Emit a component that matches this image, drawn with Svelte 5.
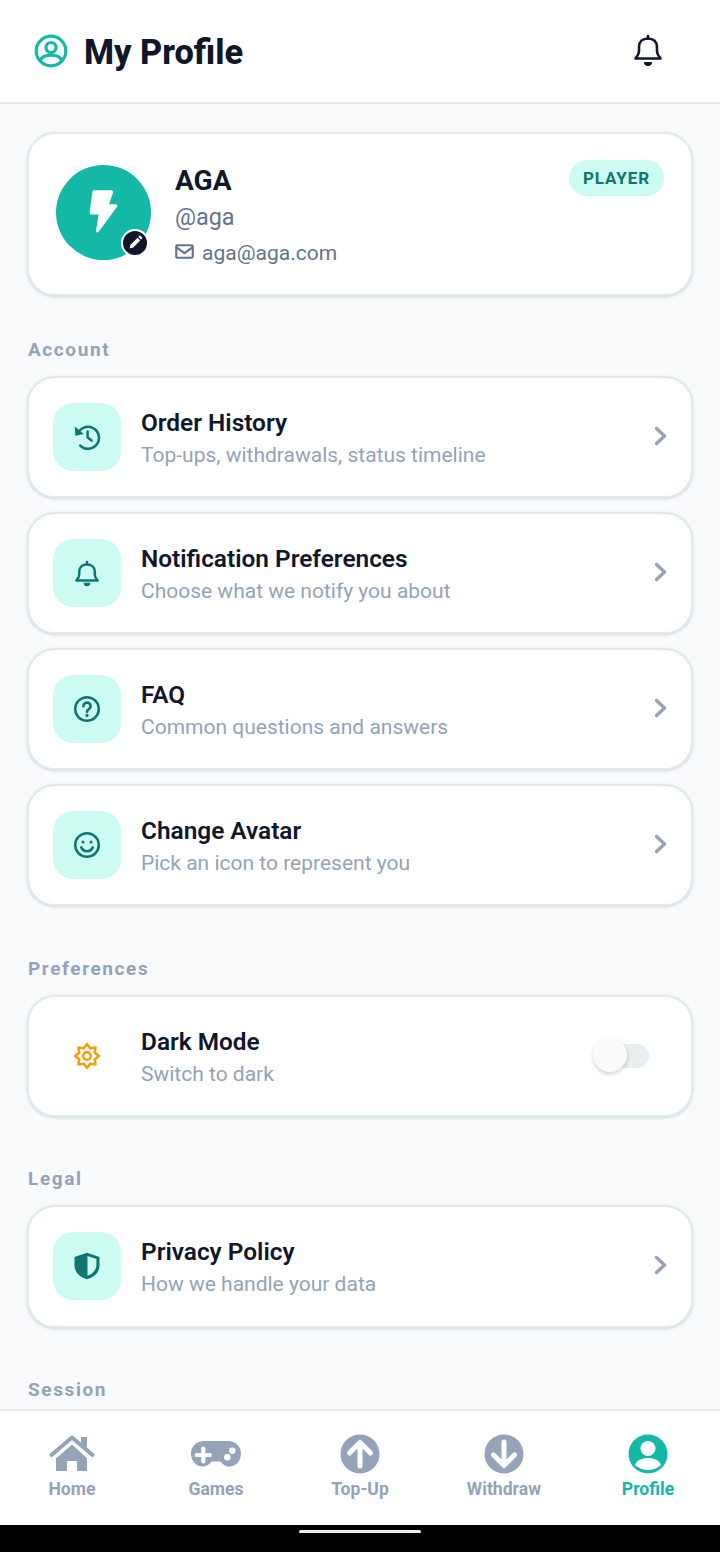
<script>
  const account = [
    { icon: 'history', title: 'Order History', sub: 'Top-ups, withdrawals, status timeline' },
    { icon: 'bell', title: 'Notification Preferences', sub: 'Choose what we notify you about' },
    { icon: 'help', title: 'FAQ', sub: 'Common questions and answers' },
    { icon: 'smile', title: 'Change Avatar', sub: 'Pick an icon to represent you' }
  ];
  const nav = [
    { icon: 'home', label: 'Home' },
    { icon: 'games', label: 'Games' },
    { icon: 'up', label: 'Top-Up' },
    { icon: 'down', label: 'Withdraw' },
    { icon: 'profile', label: 'Profile', active: true }
  ];
</script>

{#snippet glyph(name)}
  <svg class="glyph" viewBox="0 0 28 28" fill="none" stroke="currentColor" stroke-width="2.5" stroke-linecap="round" stroke-linejoin="round">
    {#if name === 'history'}
      <path d="M4.600 11.200A11 11 0 1 1 7.200 22.600" />
      <path d="M1.800 3.600 2.400 12.800 10.800 11Z" fill="currentColor" stroke="none" />
      <path d="M14.600 8.600v6l4 3" />
    {:else if name === 'bell'}
      <path d="M3.400 21.600h21.200l-1-1.400c-1-1.200-1.800-2.400-1.800-4.600v-3C21.800 8.400 18.600 5.400 14 5.400s-7.800 3-7.800 7.200v3c0 2.200-.8 3.400-1.800 4.600Z" />
      <path d="M14 3v2" />
      <path d="M10.600 23.800h6.800a3.400 3.400 0 0 1-6.800 0Z" fill="currentColor" stroke="none" />
    {:else if name === 'help'}
      <circle cx="14" cy="14" r="11.800" />
      <path d="M10.400 11.200a3.600 3.600 0 1 1 5.600 3c-1.200.8-2 1.400-2 2.600" stroke-width="2.700" />
      <circle cx="14" cy="20.400" r="1.600" fill="currentColor" stroke="none" />
    {:else if name === 'smile'}
      <circle cx="14" cy="14" r="11.800" />
      <circle cx="10" cy="11" r="1.500" fill="currentColor" stroke="none" />
      <circle cx="18" cy="11" r="1.500" fill="currentColor" stroke="none" />
      <path d="M8.200 16.400c1.200 2.500 3.300 3.800 5.800 3.800s4.600-1.300 5.800-3.800" />
    {:else if name === 'gear'}
      <path d="M14 2 17.210 6.240 22.490 5.510 21.760 10.790 26 14 21.760 17.210 22.490 22.490 17.210 21.760 14 26 10.790 21.760 5.510 22.490 6.240 17.210 2 14 6.240 10.790 5.510 5.510 10.790 6.240Z" />
      <circle cx="14" cy="14" r="3.800" />
    {:else if name === 'shield'}
      <path d="M14 .8 26.500 5v8c0 7.500-5.200 12-12.500 14.200C6.700 25 1.500 20.500 1.500 13V5Z" stroke="none" fill="currentColor" />
      <path d="M14.500 4v19.800c5-2 8.900-5.500 8.900-10.800V7Z" stroke="none" fill="#ccfbf1" />
    {/if}
  </svg>
{/snippet}

{#snippet navIcon(name)}
  <svg class="nav-glyph" viewBox="0 0 52 52">
    {#if name === 'home'}
      <path d="M5.500 27 26 9.500 46.500 27" fill="none" stroke="currentColor" stroke-width="4" stroke-linecap="round" stroke-linejoin="round" />
      <path d="M35 9h6v13l-6-5Z" fill="currentColor" />
      <path d="M10 30.500 26 16.500 41 30v13H31V33H21v10H10Z" fill="currentColor" />
    {:else if name === 'games'}
      <path d="M14 13h24c7.500 0 13 5.500 13 12.500 0 7-5 13-11.500 13-4.500 0-7-2.500-9-5H21.500c-2 2.500-4.500 5-9 5C6 38.500 1 32.500 1 25.500 1 18.500 6.500 13 14 13Z" fill="currentColor" />
      <path d="M13.300 20.500v13M6.800 27h13" stroke="#fff" stroke-width="4.200" stroke-linecap="round" />
      <circle cx="42.300" cy="22.700" r="3.300" fill="#fff" />
      <circle cx="37.300" cy="29.300" r="3.300" fill="#fff" />
    {:else if name === 'up'}
      <circle cx="26" cy="26" r="19.500" fill="currentColor" />
      <path d="M26 38V15M15.500 25 26 14.500 36.500 25" fill="none" stroke="#fff" stroke-width="5" stroke-linecap="round" stroke-linejoin="round" />
    {:else if name === 'down'}
      <circle cx="26" cy="26" r="19.500" fill="currentColor" />
      <path d="M26 14v23M15.500 27 26 37.500 36.500 27" fill="none" stroke="#fff" stroke-width="5" stroke-linecap="round" stroke-linejoin="round" />
    {:else if name === 'profile'}
      <circle cx="26" cy="26" r="19.500" fill="currentColor" />
      <circle cx="26" cy="20.500" r="7.500" fill="#fff" />
      <path d="M13 37c2-5 7-7 13-7s11 2 13 7c-3.500 3-8 5-13 5s-9.500-2-13-5Z" fill="#fff" />
    {/if}
  </svg>
{/snippet}

<div class="screen">
  <header class="topbar">
    <div class="title-group">
      <svg class="header-icon" viewBox="0 0 34 34" fill="none" stroke="currentColor" stroke-width="3.200">
        <circle cx="17" cy="17" r="14.800" />
        <circle cx="17" cy="13.500" r="5" />
        <path d="M6 26.500c2-3.800 6-5.300 11-5.300s9 1.500 11 5.300" />
      </svg>
      <h1>My Profile</h1>
    </div>
    <svg class="header-bell" viewBox="0 0 28 32" fill="none" stroke="currentColor" stroke-width="2.600" stroke-linecap="round" stroke-linejoin="round">
      <path d="M1.500 24.500h25l-1.200-1.600c-1.300-1.600-2.300-3-2.300-5.900v-4C23 7.800 19.500 4.500 14 4.500S5 7.800 5 13v4c0 2.900-1 4.300-2.300 5.900Z" />
      <path d="M14 2v2.500" />
      <path d="M10 28h8a4 4 0 0 1-8 0Z" fill="currentColor" stroke="none" />
    </svg>
  </header>

  <main class="content">
    <section class="card profile">
      <div class="avatar">
        <svg class="bolt" viewBox="0 0 30 46"><path d="M5.500 1h17.500c1.500 0 2.200 1.200 1.800 2.500L20.800 15.500h7c1.300 0 2 1.200 1.400 2.400L10 44c-.8 1.200-3 .8-2.800-.8L10 26H2.500C1 26 .5 25 .7 23.800L3.500 2.800C3.700 1.600 4.300 1 5.500 1Z" fill="#fff" /></svg>
        <span class="edit">
          <svg viewBox="0 0 18 18"><path d="M2 16l.8-4L11.500 3.300l3.200 3.200L6 15.200ZM12.500 2.300l1-1c.5-.5 1.200-.5 1.700 0l1.500 1.500c.5.500.5 1.200 0 1.700l-1 1Z" fill="#fff" /></svg>
        </span>
      </div>
      <div class="identity">
        <div class="name">AGA</div>
        <div class="handle">@aga</div>
        <div class="email">
          <svg viewBox="0 0 20 16" fill="none" stroke="currentColor" stroke-width="2.300" stroke-linejoin="round"><rect x="1.200" y="1.300" width="17.600" height="13.400" rx="1.500" /><path d="M1.500 3.500 10 9.800 18.500 3.500" /></svg>
          <span>aga@aga.com</span>
        </div>
      </div>
      <span class="badge">PLAYER</span>
    </section>

    <section class="group">
      <h2>Account</h2>
      <div class="rows">
        {#each account as item}
          <div class="card row">
            <span class="tile">{@render glyph(item.icon)}</span>
            <div class="text"><div class="row-title">{item.title}</div><div class="row-sub">{item.sub}</div></div>
            <svg class="chevron" viewBox="0 0 14 20" fill="none" stroke="currentColor" stroke-width="3.400" stroke-linecap="round" stroke-linejoin="round"><path d="M2.500 2.500 10.500 10l-8 7.500" /></svg>
          </div>
        {/each}
      </div>
    </section>

    <section class="group prefs">
      <h2>Preferences</h2>
      <div class="rows">
        <div class="card row">
          <span class="tile plain">{@render glyph('gear')}</span>
          <div class="text"><div class="row-title">Dark Mode</div><div class="row-sub">Switch to dark</div></div>
          <span class="switch"><span class="thumb"></span></span>
        </div>
      </div>
    </section>

    <section class="group">
      <h2>Legal</h2>
      <div class="rows">
        <div class="card row tall">
          <span class="tile">{@render glyph('shield')}</span>
          <div class="text"><div class="row-title">Privacy Policy</div><div class="row-sub">How we handle your data</div></div>
          <svg class="chevron" viewBox="0 0 14 20" fill="none" stroke="currentColor" stroke-width="3.400" stroke-linecap="round" stroke-linejoin="round"><path d="M2.500 2.500 10.500 10l-8 7.500" /></svg>
        </div>
      </div>
    </section>

    <section class="group">
      <h2>Session</h2>
    </section>
  </main>

  <nav class="tabs">
    {#each nav as tab}
      <div class="tab" class:active={tab.active}>
        {@render navIcon(tab.icon)}
        <span>{tab.label}</span>
      </div>
    {/each}
  </nav>

  <div class="system"><span></span></div>
</div>

<style>
  :global(body) { margin: 0; background: #f8fafc; }
  .screen {
    display: flex; flex-direction: column; width: 720px; height: 1552px; overflow: hidden;
    background: #f8fafc; color: #0f172a; font-family: Roboto, "Noto Sans", sans-serif;
  }
  .topbar {
    flex: none; box-sizing: border-box; height: 104px; display: flex; align-items: center; justify-content: space-between;
    padding: 0 58px 2px 34px; background: #fff; border-bottom: 2px solid #e2eaea;
  }
  .title-group { display: flex; align-items: center; gap: 16px; }
  .header-icon { width: 34px; height: 34px; margin-top: 2px; color: #14b8a6; }
  h1 { margin: 4px 0 0; font-size: 34.3px; line-height: 40px; font-weight: 800; }
  .header-bell { width: 28px; height: 32px; }
  .content { flex: 1; min-height: 0; overflow: hidden; padding: 28px 27px 0; }
  .card {
    box-sizing: border-box; background: #fff; border: 2px solid #e2eaea; border-radius: 28px;
    box-shadow: 0 1px 3px rgba(15, 60, 60, .18);
  }
  .profile { position: relative; display: flex; align-items: center; gap: 24px; height: 164px; padding: 0 27px 4px; }
  .avatar { position: relative; flex: none; width: 95px; height: 95px; border-radius: 50%; background: #14b8a6; display: flex; align-items: center; justify-content: center; }
  .bolt { width: 29px; height: 45px; margin-left: -1px; margin-top: -2px; }
  .edit {
    position: absolute; right: 2px; bottom: 3px; box-sizing: border-box; width: 28px; height: 28px; border-radius: 50%;
    background: #0f172a; border: 2px solid #fff; display: flex; align-items: center; justify-content: center;
  }
  .edit svg { width: 15px; height: 15px; }
  .identity { display: flex; flex-direction: column; padding-top: 10px; }
  .name { font-size: 28px; line-height: 36px; font-weight: 700; }
  .handle { font-size: 23.4px; line-height: 36px; color: #64748b; }
  .email { display: flex; align-items: center; gap: 8px; font-size: 21px; line-height: 36px; color: #64748b; }
  .email svg { width: 19px; height: 15px; margin-top: -4px; }
  .badge {
    position: absolute; top: 26px; right: 27px; padding: 0 14px; height: 36px; line-height: 36px; border-radius: 18px;
    background: #ccfbf1; color: #0f766e; font-size: 17px; font-weight: 700; letter-spacing: .9px;
  }
  .group { margin-top: 42px; }
  .group + .group { margin-top: 50px; }
  .group.prefs { margin-top: 51px; }
  h2 { margin: 0 0 14px 1px; font-size: 19px; line-height: 24px; font-weight: 700; letter-spacing: 1.6px; color: #94a3b8; }
  .rows { display: flex; flex-direction: column; gap: 14px; }
  .row { display: flex; align-items: center; gap: 20px; height: 122px; padding: 0 24px; }
  .row.tall { height: 123px; padding-bottom: 2px; }
  .tile { flex: none; width: 68px; height: 68px; border-radius: 20px; background: #ccfbf1; color: #0f766e; display: flex; align-items: center; justify-content: center; }
  .tile.plain { background: none; color: #f59e0b; }
  .glyph { width: 28px; height: 28px; }
  .text { flex: 1; min-width: 0; padding-top: 4px; }
  .row-title { font-size: 24.4px; line-height: 32px; font-weight: 600; }
  .row-sub { font-size: 21px; line-height: 32px; color: #94a3b8; }
  .chevron { flex: none; width: 14px; height: 20px; margin: -2px -1px 0 0; color: #94a3b8; }
  .switch { position: relative; flex: none; width: 54px; height: 24px; margin-right: 18px; border-radius: 12px; background: #e7efef; }
  .thumb { position: absolute; left: -2px; top: -6px; width: 34px; height: 34px; border-radius: 50%; background: #fafafa; box-shadow: 0 2px 4px rgba(15, 40, 40, .2); }
  .tabs { flex: none; box-sizing: border-box; height: 116px; display: grid; grid-template-columns: repeat(5, 1fr); background: #fff; border-top: 2px solid #e2eaea; }
  .tab { display: flex; flex-direction: column; align-items: center; padding-top: 17px; color: #94a3b8; }
  .tab.active { color: #14b8a6; }
  .nav-glyph { width: 52px; height: 52px; margin-bottom: -3px; }
  .tab span { font-size: 17.6px; line-height: 24px; font-weight: 700; }
  .system { flex: none; height: 27px; background: #000; display: flex; justify-content: center; padding-top: 5px; box-sizing: border-box; }
  .system span { width: 122px; height: 3px; border-radius: 2px; background: #e6eeee; }
</style>
